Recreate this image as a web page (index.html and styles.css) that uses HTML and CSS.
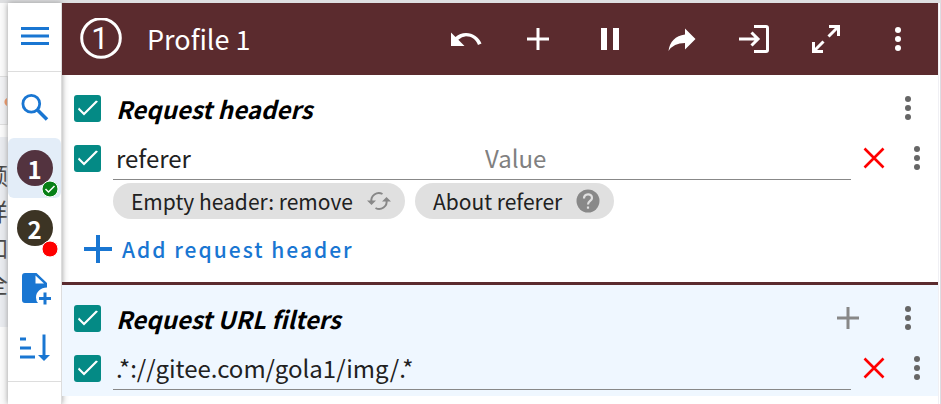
FILE: index.html
```html
<!DOCTYPE html>
<html lang="en">
<head>
<meta charset="utf-8">
<title>Profile 1</title>
<link rel="stylesheet" href="styles.css">
</head>
<body>
<svg class="sprite" aria-hidden="true">
  <symbol id="dots" viewBox="0 0 36 36"><circle cx="18" cy="9" r="3"/><circle cx="18" cy="18" r="3"/><circle cx="18" cy="27" r="3"/></symbol>
  <symbol id="plus" viewBox="0 0 36 36"><path d="M7 18H29M18 7V29" fill="none" stroke="currentColor" stroke-width="3"/></symbol>
  <symbol id="close" viewBox="0 0 36 36"><path d="M8.500 8.500L27.500 27.500M27.500 8.500L8.500 27.500" fill="none" stroke="currentColor" stroke-width="2.600"/></symbol>
</svg>
<div class="app">
  <div class="page-left" aria-hidden="true">
    <div class="page-pill"></div>
    <div class="page-text"><span>额</span><span>样</span><span>加</span><span>全</span></div>
  </div>
  <nav class="sidebar">
    <button class="side-btn menu" aria-label="Menu"><svg viewBox="0 0 36 36"><path d="M4 10.500H32M4 18H32M4 25.500H32" fill="none" stroke="currentColor" stroke-width="3"/></svg></button>
    <button class="side-btn search" aria-label="Search"><svg viewBox="0 0 36 36"><circle cx="14.300" cy="16.800" r="8.400" fill="none" stroke="currentColor" stroke-width="2.800"/><path d="M20 22.500L30 32.500" fill="none" stroke="currentColor" stroke-width="3.600"/></svg></button>
    <button class="side-btn selected" aria-label="Profile 1"><span class="avatar one">1<svg class="badge" viewBox="0 0 18 18"><circle cx="9" cy="9" r="8" fill="#078016" stroke="#fff"/><path d="M4.500 9L7.500 12L13.500 6" fill="none" stroke="#fff" stroke-width="1.500"/></svg></span></button>
    <button class="side-btn" aria-label="Profile 2"><span class="avatar two">2<svg class="badge" viewBox="0 0 18 18"><circle cx="9" cy="9" r="8" fill="#f00" stroke="#fff"/></svg></span></button>
    <button class="side-btn" aria-label="New profile"><svg viewBox="0 0 36 36"><path d="M8 3H19.500L30 13V17.500C23.500 17.500 19 22 19 27.500Q19 31 21 33H8Q5 33 5 30V6Q5 3 8 3ZM18.500 5.500V13.500H27Z" fill-rule="evenodd"/><path d="M22 28.500H34M28 22.500V34.500" fill="none" stroke="currentColor" stroke-width="3"/></svg></button>
    <button class="side-btn" aria-label="Sort profiles"><svg viewBox="0 0 36 36"><path d="M3 9H9M3 18H14M3 27H18" fill="none" stroke="currentColor" stroke-width="3"/><path d="M27 4.500V28" fill="none" stroke="currentColor" stroke-width="3"/><path d="M21 25H33L27 31Z"/></svg></button>
    <div class="side-end"></div>
  </nav>
  <main class="main">
    <header class="bar">
      <svg class="number" viewBox="0 0 42 42" aria-hidden="true"><circle cx="21" cy="20" r="19.300" fill="none" stroke="#fff" stroke-width="3"/><text x="20" y="31" text-anchor="middle" fill="#fff">1</text></svg>
      <h1>Profile 1</h1>
      <button aria-label="Undo"><svg viewBox="0 0 36 36"><path d="M3 11.500L7.500 16Q12 12 18 12C25 12 31 16.500 33.500 22.500L30 24C28 18.500 23.500 15.300 18 15.300Q14 15.300 10.300 18.800L16.500 25H3Z"/></svg></button>
      <button aria-label="Add"><svg><use href="#plus"/></svg></button>
      <button aria-label="Pause"><svg viewBox="0 0 36 36"><path d="M9 7H15V29H9ZM21 7H27V29H21Z"/></svg></button>
      <button aria-label="Share"><svg viewBox="0 0 36 36"><path d="M21 7.500L31.500 18L21 28.500V22Q9.500 22 4.500 30Q6.500 15.500 21 13.500Z"/></svg></button>
      <button aria-label="Sign in"><svg viewBox="0 0 36 36"><path d="M18 5.500H30Q31.500 5.500 31.500 7V29Q31.500 30.500 30 30.500H18M3 18H22M15.500 11.500L22 18L15.500 24.500" fill="none" stroke="currentColor" stroke-width="3"/></svg></button>
      <button aria-label="Expand"><svg viewBox="0 0 36 36"><path d="M20.500 15.500L30 6M21 5.500H30.500V15M15.500 20.500L6 30M5.500 21V30.500H15" fill="none" stroke="currentColor" stroke-width="3"/></svg></button>
      <button aria-label="More"><svg><use href="#dots"/></svg></button>
    </header>

    <section class="section">
      <div class="title-row">
        <input type="checkbox" id="headers" checked>
        <label for="headers">Request headers</label>
        <button aria-label="Header options"><svg><use href="#dots"/></svg></button>
      </div>
      <div class="row">
        <input type="checkbox" aria-label="Enable referer" checked>
        <div class="field"><input type="text" aria-label="Name" value="referer"><input type="text" aria-label="Value" placeholder="Value"></div>
        <button class="remove" aria-label="Remove"><svg><use href="#close"/></svg></button>
        <button class="more" aria-label="More"><svg><use href="#dots"/></svg></button>
      </div>
      <div class="chips">
        <button class="chip">Empty header: remove<svg viewBox="0 0 24 24"><path d="M4.500 13A7.500 7.500 0 0 1 15.500 5M19.500 11A7.500 7.500 0 0 1 8.500 19" fill="none" stroke="currentColor" stroke-width="2"/><path d="M0 11.500H9L4.500 16ZM15 12.500H24L19.500 8Z"/></svg></button>
        <button class="chip">About referer<svg viewBox="0 0 24 24"><circle cx="12" cy="12" r="11.500"/><path d="M8 9.500C8 4 16 4 16 9C16 12 12 12 12 15.500" fill="none" stroke="#e0e0e0" stroke-width="2.200"/><path d="M10.900 17.500H13.100V19.700H10.900Z" fill="#e0e0e0"/></svg></button>
      </div>
      <button class="add"><svg viewBox="0 0 28 28"><path d="M0 14H28M14 0V28" fill="none" stroke="currentColor" stroke-width="4"/></svg>Add request header</button>
    </section>

    <section class="section filters">
      <div class="title-row">
        <input type="checkbox" id="filters" checked>
        <label for="filters">Request URL filters</label>
        <button class="plus" aria-label="Add filter"><svg><use href="#plus"/></svg></button>
        <button aria-label="Filter options"><svg><use href="#dots"/></svg></button>
      </div>
      <div class="row">
        <input type="checkbox" aria-label="Enable filter" checked>
        <div class="field"><input type="text" aria-label="URL filter" value=".*://gitee.com/gola1/img/.*"></div>
        <button class="remove" aria-label="Remove"><svg><use href="#close"/></svg></button>
        <button class="more" aria-label="More"><svg><use href="#dots"/></svg></button>
      </div>
    </section>
  </main>
  <div class="page-right" aria-hidden="true"></div>
</div>
</body>
</html>
```
FILE: styles.css
```css
* { box-sizing: border-box; }
body {
  margin: 0;
  background: #fff;
  color: #212121;
  font-family: "Noto Sans CJK SC", "Noto Sans", sans-serif;
}
button, input { font: inherit; }
button {
  display: flex;
  align-items: center;
  justify-content: center;
  padding: 0;
  border: 0;
  background: none;
  color: inherit;
}
svg { display: block; width: 36px; height: 36px; fill: currentColor; flex: none; }
.sprite { position: absolute; width: 0; height: 0; }
.app { display: flex; min-height: 100vh; border-top: 3px solid #dedfe1; }

.page-left { width: 8px; overflow: hidden; background: #fafafa; }
.page-pill {
  height: 49px;
  margin-top: 73px;
  border: 1px solid #ddd;
  border-left: 0;
  background: radial-gradient(circle at 9px 25px, #f0905a 4px, #f1f2f4 5px);
}
.page-text {
  display: flex;
  flex-direction: column;
  align-items: flex-end;
  margin-top: 12px;
  padding: 20px 0 0;
  height: 190px;
  background: #e9ebef;
  color: #444;
  font-size: 24px;
  line-height: 36px;
}
.page-right { width: 3px; border-left: 1px solid #f0f0f4; border-right: 1px solid #dcdce2; }

.sidebar {
  display: flex;
  flex-direction: column;
  width: 54px;
  border-right: 1px solid #ddd;
  background: #fff;
  color: #1976d2;
  box-shadow: 0 0 6px #999;
}
.side-btn { height: 60px; width: 100%; }
.side-btn.menu { height: 69px; padding-bottom: 2px; border-bottom: 1px solid #ddd; }
.side-btn.search { height: 66px; }
.side-btn.selected { border-radius: 6px; background: #e3edf8; }
.avatar {
  position: relative;
  width: 36px;
  height: 36px;
  border-radius: 50%;
  color: #fff;
  font-size: 24px;
  font-weight: 700;
  line-height: 38px;
}
.one { background: #53333f; }
.two { background: #3c3424; }
.badge { position: absolute; right: -6px; bottom: -12px; width: 18px; height: 18px; }
.side-end { height: 4px; border-bottom: 1px solid #ddd; }

.main { flex: 1; min-width: 0; }
.bar {
  display: flex;
  align-items: center;
  height: 72px;
  padding: 0 4px 0 18px;
  background: #5b2b2e;
  color: #fff;
}
.bar button { width: 72px; height: 72px; }
.number { width: 42px; height: 42px; font-family: Roboto, sans-serif; font-size: 31px; }
h1 { flex: 1; margin: 0 0 0 25px; font-size: 27px; font-weight: 400; line-height: 40px; white-space: nowrap; }

.section { padding: 8px 0 3px; }
.filters { border-top: 3px solid #5b2b2e; background: #eff7ff; }
.title-row, .row { display: flex; align-items: center; height: 50px; padding-left: 12px; }
.title-row label {
  flex: 1;
  margin-left: 15px;
  color: #000;
  font-size: 24px;
  font-style: italic;
  font-weight: 700;
}
.title-row button { width: 60px; height: 48px; color: #666; }
.title-row .plus { color: #888; }
input[type="checkbox"] {
  appearance: none;
  flex: none;
  width: 27px;
  height: 27px;
  margin: 0;
  border-radius: 3px;
  background: #048a85;
}
input[type="checkbox"]:checked::before {
  content: "";
  display: block;
  width: 27px;
  height: 27px;
  background: #fff;
  clip-path: polygon(4px 15px, 5px 13px, 10px 18px, 22px 6px, 24px 7px, 10px 21px);
}
.field { display: flex; flex: 1; height: 44px; margin-left: 12px; border-bottom: 1px solid #888; }
.field input {
  flex: 1;
  min-width: 0;
  padding: 0 3px;
  border: 0;
  outline: 0;
  background: none;
  color: #212121;
  font-size: 24px;
}
.field input::placeholder { color: #808080; opacity: 1; }
.row .remove { width: 46px; color: #f00; }
.row .more { width: 40px; margin-right: 1px; color: #666; }
.chips { display: flex; gap: 10px; padding-left: 51px; }
.chip { gap: 14px; height: 36px; padding: 0 14px 0 18px; border-radius: 18px; background: #e0e0e0; font-size: 21px; white-space: nowrap; }
.chip svg { width: 24px; height: 24px; color: #888; }
.add { gap: 10px; height: 60px; padding-left: 22px; color: #1976d2; font-size: 21px; font-weight: 500; letter-spacing: 2px; }
.add svg { width: 28px; height: 28px; }
```
